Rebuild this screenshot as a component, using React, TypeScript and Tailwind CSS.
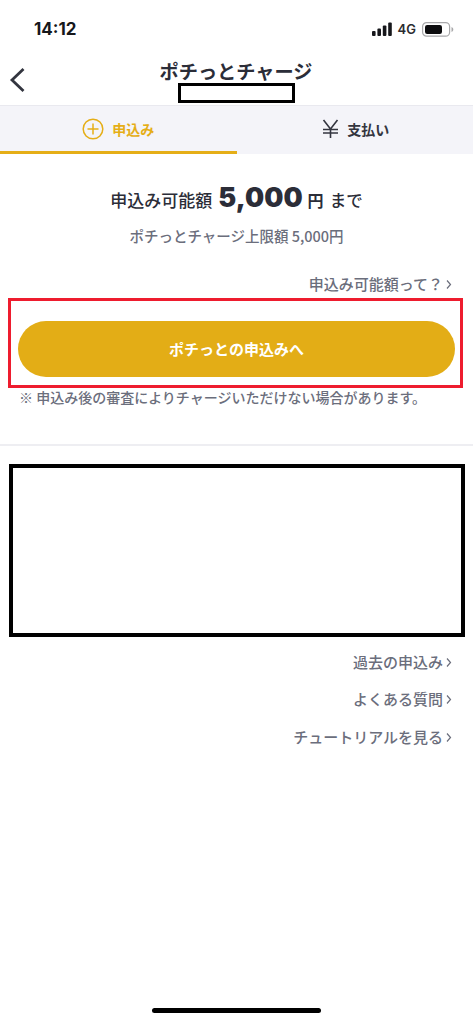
const font = {
  fontFamily: '"Noto Sans CJK JP", Inter, "Liberation Sans", sans-serif',
};

function Chevron() {
  return (
    <svg width="6" height="11" viewBox="0 0 6 11" fill="none" className="ml-[3px]">
      <path d="M1 1.500l3.500 4-3.500 4" stroke="#6b6e7c" strokeWidth="1.200" />
    </svg>
  );
}

function LinkRow({ label, className }: { label: string; className: string }) {
  return (
    <div className={`flex items-center justify-end pr-[21px] text-[15px] leading-[20px] font-medium text-[#6b6e7c] ${className}`}>
      <span>{label}</span>
      <Chevron />
    </div>
  );
}

function StatusBar() {
  return (
    <div className="h-[59px] flex items-start justify-between pt-[18px] pl-[34px] pr-[19px]">
      <span className="text-[17px] leading-[22px] font-bold text-[#16171b]" style={{ fontFamily: "Inter, sans-serif" }}>14:12</span>
      <div className="flex items-center gap-[5px] h-[22px]">
        <svg width="21" height="14" viewBox="0 0 21 14" fill="#16171b">
          <rect x="0" y="9" width="3.6" height="5" rx="1" />
          <rect x="5.4" y="6.5" width="3.6" height="7.5" rx="1" />
          <rect x="10.8" y="3.5" width="3.6" height="10.5" rx="1" />
          <rect x="16.2" y="0.5" width="3.6" height="13.5" rx="1" />
        </svg>
        <span className="text-[13px] leading-[16px] font-semibold text-[#2b2c30]" style={{ fontFamily: "Inter, sans-serif" }}>4G</span>
        <svg width="32" height="15" viewBox="0 0 32 15" fill="none" className="ml-[1px]">
          <rect x="0.6" y="0.6" width="27" height="13.6" rx="4" stroke="#a8a8aa" strokeWidth="1.2" />
          <rect x="3" y="3" width="17" height="9" rx="2.2" fill="#0c0c0e" />
          <path d="M29.5 5v5c1.2-.4 1.8-1.4 1.8-2.5S30.700 5.400 29.500 5z" fill="#a8a8aa" />
        </svg>
      </div>
    </div>
  );
}

function Header() {
  return (
    <div className="relative h-[46px] flex flex-col items-center">
      <svg width="17" height="26" viewBox="0 0 17 26" fill="none" className="absolute left-[9px] top-[8px]">
        <path d="M14.500 2L3 13l11.500 11" stroke="#33353f" strokeWidth="2.800" />
      </svg>
      <div className="text-[19.200px] leading-[24px] font-bold text-[#2b2d38] ml-[-1px]">ポチっとチャージ</div>
      <div className="w-[117px] h-[20px] border-[3px] border-black bg-white ml-[-1px]" />
    </div>
  );
}

function Tabs() {
  return (
    <div className="h-[49px] bg-[#f4f4f9] border-t border-[#e9e9ef] flex">
      <div className="w-1/2 border-b-[3px] border-[#e5ae17] flex items-center justify-center gap-[8px]">
        <svg width="22" height="22" viewBox="0 0 22 22" fill="none" stroke="#e5ae17" strokeWidth="1.500">
          <circle cx="11" cy="11" r="9.800" />
          <path d="M11 5.500v11M5.500 11h11" />
        </svg>
        <span className="text-[14px] leading-[18px] font-bold text-[#e5ae17]">申込み</span>
      </div>
      <div className="w-1/2 flex items-center justify-center gap-[8px] pb-[3px] pl-[2px]">
        <svg width="17" height="19" viewBox="0 0 17 19" fill="none" stroke="#33353f" strokeWidth="1.600">
          <path d="M1.500 1l7 9 7-9M8.500 10v9M1 10.500h15M1 14h15" />
        </svg>
        <span className="text-[14px] leading-[18px] font-bold text-[#33353f]">支払い</span>
      </div>
    </div>
  );
}

export default function App() {
  return (
    <div className="relative w-[473px] h-[1024px] bg-white overflow-hidden" style={font}>
      <StatusBar />
      <Header />
      <Tabs />

      <div className="mt-[24px] flex items-baseline justify-center h-[38px] text-[#2b2d38]">
        <span className="text-[17px] font-medium">申込み可能額</span>
        <span className="text-[27px] font-black ml-[6px]" style={{ fontFamily: "Inter, sans-serif" }}>5,000</span>
        <span className="text-[16px] font-bold ml-[5px]">円</span>
        <span className="text-[16.500px] font-medium ml-[6px]">まで</span>
      </div>
      <div className="mt-[10px] text-center text-[14.500px] leading-[20px] text-[#6b6e7c] font-medium">ポチっとチャージ上限額 5,000円</div>

      <LinkRow label="申込み可能額って？" className="mt-[28px]" />

      <div className="ml-[8px] mt-[4px] w-[455px] h-[90px] border-[3px] border-[#ee1c2e] pl-[7px] pt-[20px]">
        <div className="w-[437px] h-[56px] rounded-full bg-[#e3ad16] flex items-center justify-center text-white text-[15px] font-bold">
          ポチっとの申込みへ
        </div>
      </div>
      <div className="mt-[-1px] pl-[19px] text-[14px] leading-[20px] font-medium text-[#6b6e7c] whitespace-nowrap">※ 申込み後の審査によりチャージいただけない場合があります。</div>

      <div className="mt-[37px] h-[2px] bg-[#eeeef2]" />

      <div className="ml-[9px] mt-[18px] w-[456px] h-[173px] border-[4px] border-black bg-white" />

      <LinkRow label="過去の申込み" className="mt-[15px]" />
      <LinkRow label="よくある質問" className="mt-[17px]" />
      <LinkRow label="チュートリアルを見る" className="mt-[18px]" />

      <div className="absolute left-[152px] top-[1008px] w-[169px] h-[5px] rounded-full bg-black" />
    </div>
  );
}
